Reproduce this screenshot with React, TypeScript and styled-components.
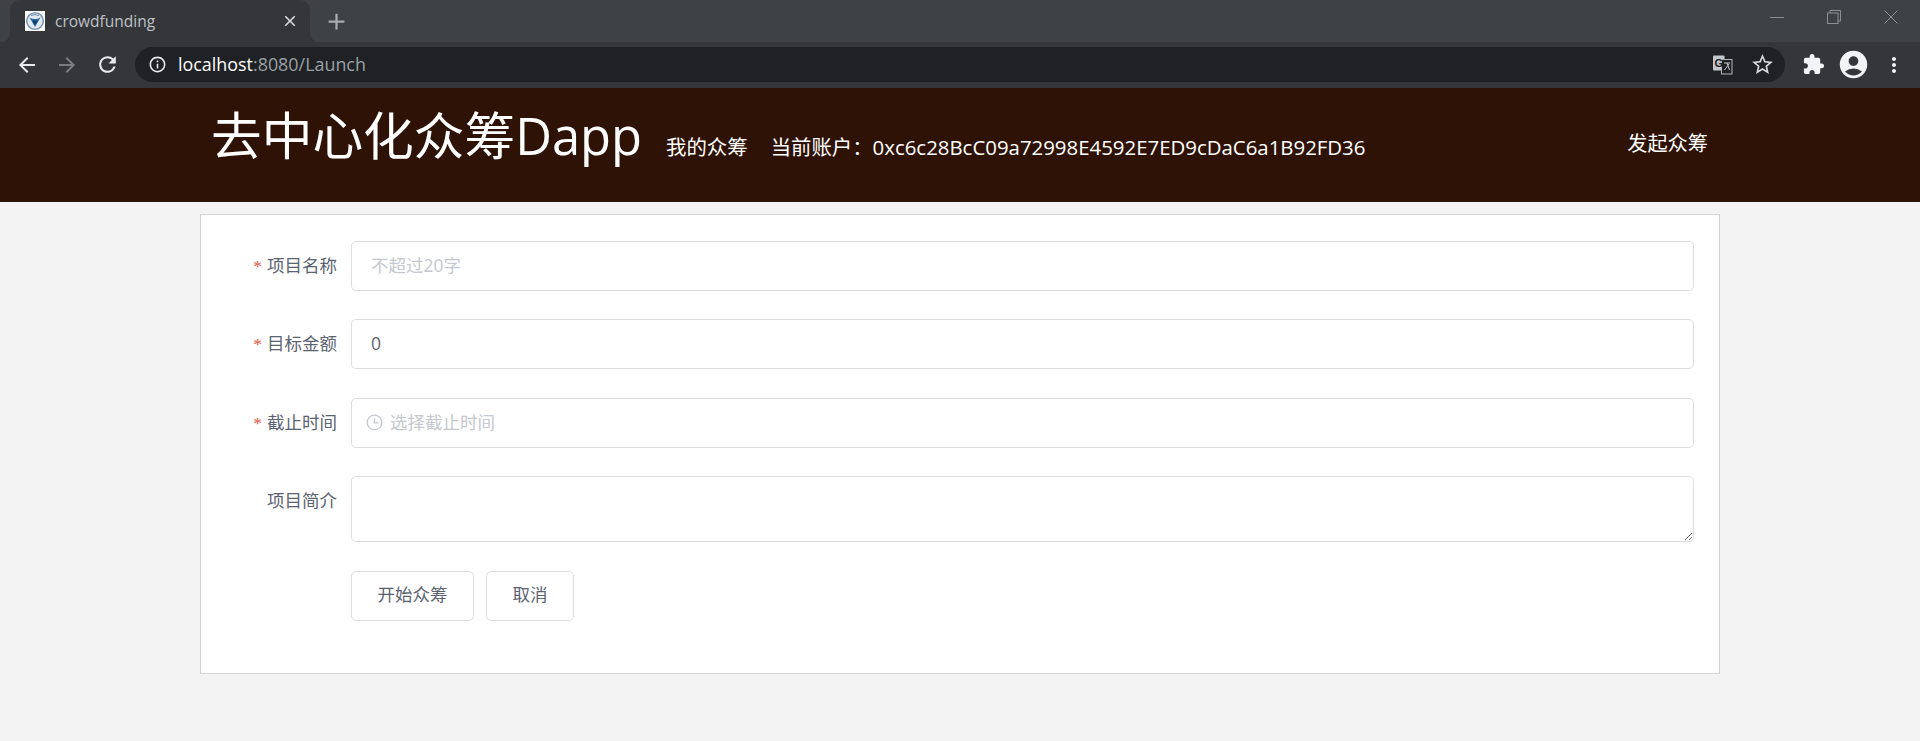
import React from 'react';
import styled, { createGlobalStyle } from 'styled-components';
import {
  MdAdd,
  MdArrowBack,
  MdArrowForward,
  MdClose,
  MdRefresh,
  MdInfoOutline,
  MdStarBorder,
  MdExtension,
  MdAccountCircle,
  MdMoreVert,
} from 'react-icons/md';

const FONT = `"Open Sans", "Noto Sans CJK SC", sans-serif`;

const GlobalStyle = createGlobalStyle`
  html, body {
    margin: 0;
    padding: 0;
    background: #f3f3f3;
  }
  * {
    box-sizing: border-box;
  }
`;

const Favicon = () => (
  <svg width="20" height="20" viewBox="0 0 20 20">
    <rect width="20" height="20" fill="#fff" />
    <circle cx="10" cy="10" r="8.3" fill="#e3ebf2" stroke="#7f9ab6" strokeWidth="1.6" />
    <path d="M4.5 6.5 Q10 9.5 15.5 6.5 L10 16 Z" fill="#2a6ba3" />
    <path d="M7 9.5 L13 9.5 L10 14 Z" fill="#123f6b" />
    <path d="M6 4.5 Q10 2.8 14 4.5" fill="none" stroke="#6e8aa6" />
  </svg>
);

const TranslateIcon = () => (
  <svg width="20" height="20" viewBox="0 0 20 20">
    <rect x="0" y="0.5" width="11.5" height="15" rx="1" fill="#c4c6c9" />
    <rect x="8.5" y="4.5" width="10.5" height="14.5" fill="#202124" stroke="#b5b7ba" strokeWidth="1" />
    <text x="1.6" y="12" fontSize="11" fontWeight="700" fontFamily="Liberation Sans, sans-serif" fill="#202124">
      G
    </text>
    <path d="M11 8 H17 M14 8 L16.5 15 M16 9 L11.5 15" stroke="#c4c6c9" strokeWidth="1" fill="none" />
  </svg>
);

const ClockIcon = () => (
  <svg width="17" height="17" viewBox="0 0 17 17" fill="none" stroke="#c5c8ce" strokeWidth="1.3">
    <circle cx="8.5" cy="8.5" r="7.3" />
    <path d="M8.5 4.2 V8.8 H12.4" />
  </svg>
);

const App: React.FC = () => {
  return (
    <>
      <GlobalStyle />
      <TabStrip>
        <Tab>
          <Favicon />
          <TabTitle>crowdfunding</TabTitle>
          <MdClose size={18} color="#dfe1e5" />
        </Tab>
        <NewTab>
          <MdAdd size={27} color="#a9acb0" />
        </NewTab>
        <WindowControls>
          <svg width="14" height="14" viewBox="0 0 14 14" stroke="#8e9194" fill="none">
            <path d="M0 7.5 H14" />
          </svg>
          <svg width="14" height="14" viewBox="0 0 14 14" stroke="#8e9194" fill="none">
            <rect x="0.5" y="3" width="10.5" height="10.5" />
            <path d="M3 3 V0.5 H13.5 V11 H11" />
          </svg>
          <svg width="14" height="14" viewBox="0 0 14 14" stroke="#8e9194" fill="none">
            <path d="M0.5 0.5 L13.5 13.5 M13.5 0.5 L0.5 13.5" />
          </svg>
        </WindowControls>
      </TabStrip>
      <Toolbar>
        <NavButtons>
          <MdArrowBack size={24} color="#e8eaed" />
          <MdArrowForward size={24} color="#7b7d80" />
          <MdRefresh size={25} color="#e8eaed" />
        </NavButtons>
        <AddressBar>
          <MdInfoOutline size={19} color="#e8eaed" />
          <Url>
            <strong>localhost</strong>:8080/Launch
          </Url>
          <AddressActions>
            <TranslateIcon />
            <MdStarBorder size={25} color="#d5d7da" />
          </AddressActions>
        </AddressBar>
        <ToolbarActions>
          <MdExtension size={23} color="#f1f3f4" />
          <MdAccountCircle size={33} color="#f1f3f4" />
          <MdMoreVert size={24} color="#f1f3f4" />
        </ToolbarActions>
      </Toolbar>
      <Header>
        <Title>去中心化众筹Dapp</Title>
        <NavText>我的众筹</NavText>
        <NavText>当前账户：0xc6c28BcC09a72998E4592E7ED9cDaC6a1B92FD36</NavText>
        <LaunchLink>发起众筹</LaunchLink>
      </Header>
      <Card>
        <FormItem>
          <Label $required>项目名称</Label>
          <Input placeholder="不超过20字" />
        </FormItem>
        <FormItem>
          <Label $required>目标金额</Label>
          <Input defaultValue="0" />
        </FormItem>
        <FormItem>
          <Label $required>截止时间</Label>
          <DateField>
            <DateIcon>
              <ClockIcon />
            </DateIcon>
            <Input $withIcon placeholder="选择截止时间" />
          </DateField>
        </FormItem>
        <FormItem>
          <Label>项目简介</Label>
          <TextArea />
        </FormItem>
        <Buttons>
          <Button>开始众筹</Button>
          <Button>取消</Button>
        </Buttons>
      </Card>
    </>
  );
};

export default App;

const TabStrip = styled.div`
  height: 42px;
  background: #3f4245;
  display: flex;
  padding-left: 10px;
`;

const Tab = styled.div`
  position: relative;
  width: 300px;
  height: 42px;
  background: #35363a;
  border-radius: 10px 10px 0 0;
  display: flex;
  align-items: center;
  padding: 0 11px 0 15px;

  &::before,
  &::after {
    content: '';
    position: absolute;
    bottom: 0;
    width: 10px;
    height: 10px;
  }
  &::before {
    left: -10px;
    background: radial-gradient(circle at 0 0, transparent 10px, #35363a 10.5px);
  }
  &::after {
    right: -10px;
    background: radial-gradient(circle at 100% 0, transparent 10px, #35363a 10.5px);
  }
`;

const TabTitle = styled.span`
  flex: 1;
  margin-left: 10px;
  font: 15.5px 'Open Sans', sans-serif;
  color: #bdc1c6;
`;

const NewTab = styled.div`
  margin-left: 13px;
  display: flex;
  align-items: center;
`;

const WindowControls = styled.div`
  margin-left: auto;
  display: flex;
  align-items: center;
  gap: 43px;
  padding: 0 22px 8px 0;
`;

const Toolbar = styled.div`
  height: 46px;
  background: #35363a;
  display: flex;
  align-items: flex-start;
  padding-top: 5px;
`;

const NavButtons = styled.div`
  width: 135px;
  height: 35px;
  display: flex;
  align-items: center;
  gap: 16px;
  padding-left: 15px;
`;

const AddressBar = styled.div`
  width: 1650px;
  height: 35px;
  border-radius: 18px;
  background: #202124;
  display: flex;
  align-items: center;
  padding: 0 10px 0 13px;
`;

const Url = styled.span`
  margin: 0 0 2px 11px;
  font: 17.9px 'Open Sans', sans-serif;
  color: #9aa0a6;
  strong {
    font-weight: 400;
    color: #fff;
  }
`;

const AddressActions = styled.div`
  margin-left: auto;
  display: flex;
  align-items: center;
  gap: 17px;
`;

const ToolbarActions = styled.div`
  flex: 1;
  height: 35px;
  display: flex;
  align-items: center;
  gap: 12px;
  padding-left: 17px;
`;

const Header = styled.header`
  height: 114px;
  background: #2f1206;
  display: flex;
  align-items: flex-start;
  padding-left: 211px;
  color: #fff;
  font-family: ${FONT};
`;

const Title = styled.h1`
  margin: 12px 24px 0 0;
  font-size: 50.7px;
  line-height: 72px;
  font-weight: 400;
`;

const NavText = styled.span`
  margin: 44px 23px 0 0;
  font-size: 20.4px;
  line-height: 30px;
`;

const LaunchLink = styled.span`
  margin: 40px 0 0 auto;
  padding-right: 212px;
  font-size: 20.2px;
  line-height: 30px;
`;

const Card = styled.main`
  width: 1520px;
  height: 460px;
  margin: 12px 0 0 200px;
  background: #fff;
  border: 1px solid #d4d4d4;
  padding: 26px 25px 0 0;
  font-family: ${FONT};
  font-size: 17.5px;
`;

const FormItem = styled.div`
  display: flex;
  margin-bottom: 28.4px;
`;

const Label = styled.label<{ $required?: boolean }>`
  width: 150px;
  flex: none;
  padding-right: 14px;
  line-height: 48px;
  text-align: right;
  color: #5c6370;
  &::before {
    content: ${({ $required }) => ($required ? "'*'" : 'none')};
    margin-right: 5px;
    font-family: 'Liberation Serif', serif;
    color: #e9573f;
  }
`;

const Input = styled.input<{ $withIcon?: boolean }>`
  width: 100%;
  height: 50px;
  border: 1px solid #dcdee2;
  border-radius: 5px;
  padding: 0 20px 2px ${({ $withIcon }) => ($withIcon ? '38px' : '19px')};
  font: inherit;
  color: #5c6370;
  outline: none;
  &::placeholder {
    color: #c5c8ce;
  }
`;

const DateField = styled.div`
  position: relative;
  flex: 1;
`;

const DateIcon = styled.span`
  position: absolute;
  left: 15px;
  top: 16px;
  line-height: 0;
`;

const TextArea = styled.textarea`
  flex: 1;
  height: 66px;
  border: 1px solid #dcdee2;
  border-radius: 5px;
  padding: 6px 20px;
  font: inherit;
  outline: none;
  resize: vertical;
`;

const Buttons = styled.div`
  display: flex;
  gap: 12px;
  padding-left: 150px;
`;

const Button = styled.button`
  height: 50px;
  padding: 0 25.5px 4px;
  background: #fff;
  border: 1px solid #dcdee2;
  border-radius: 5px;
  font: inherit;
  color: #5c6370;
`;
